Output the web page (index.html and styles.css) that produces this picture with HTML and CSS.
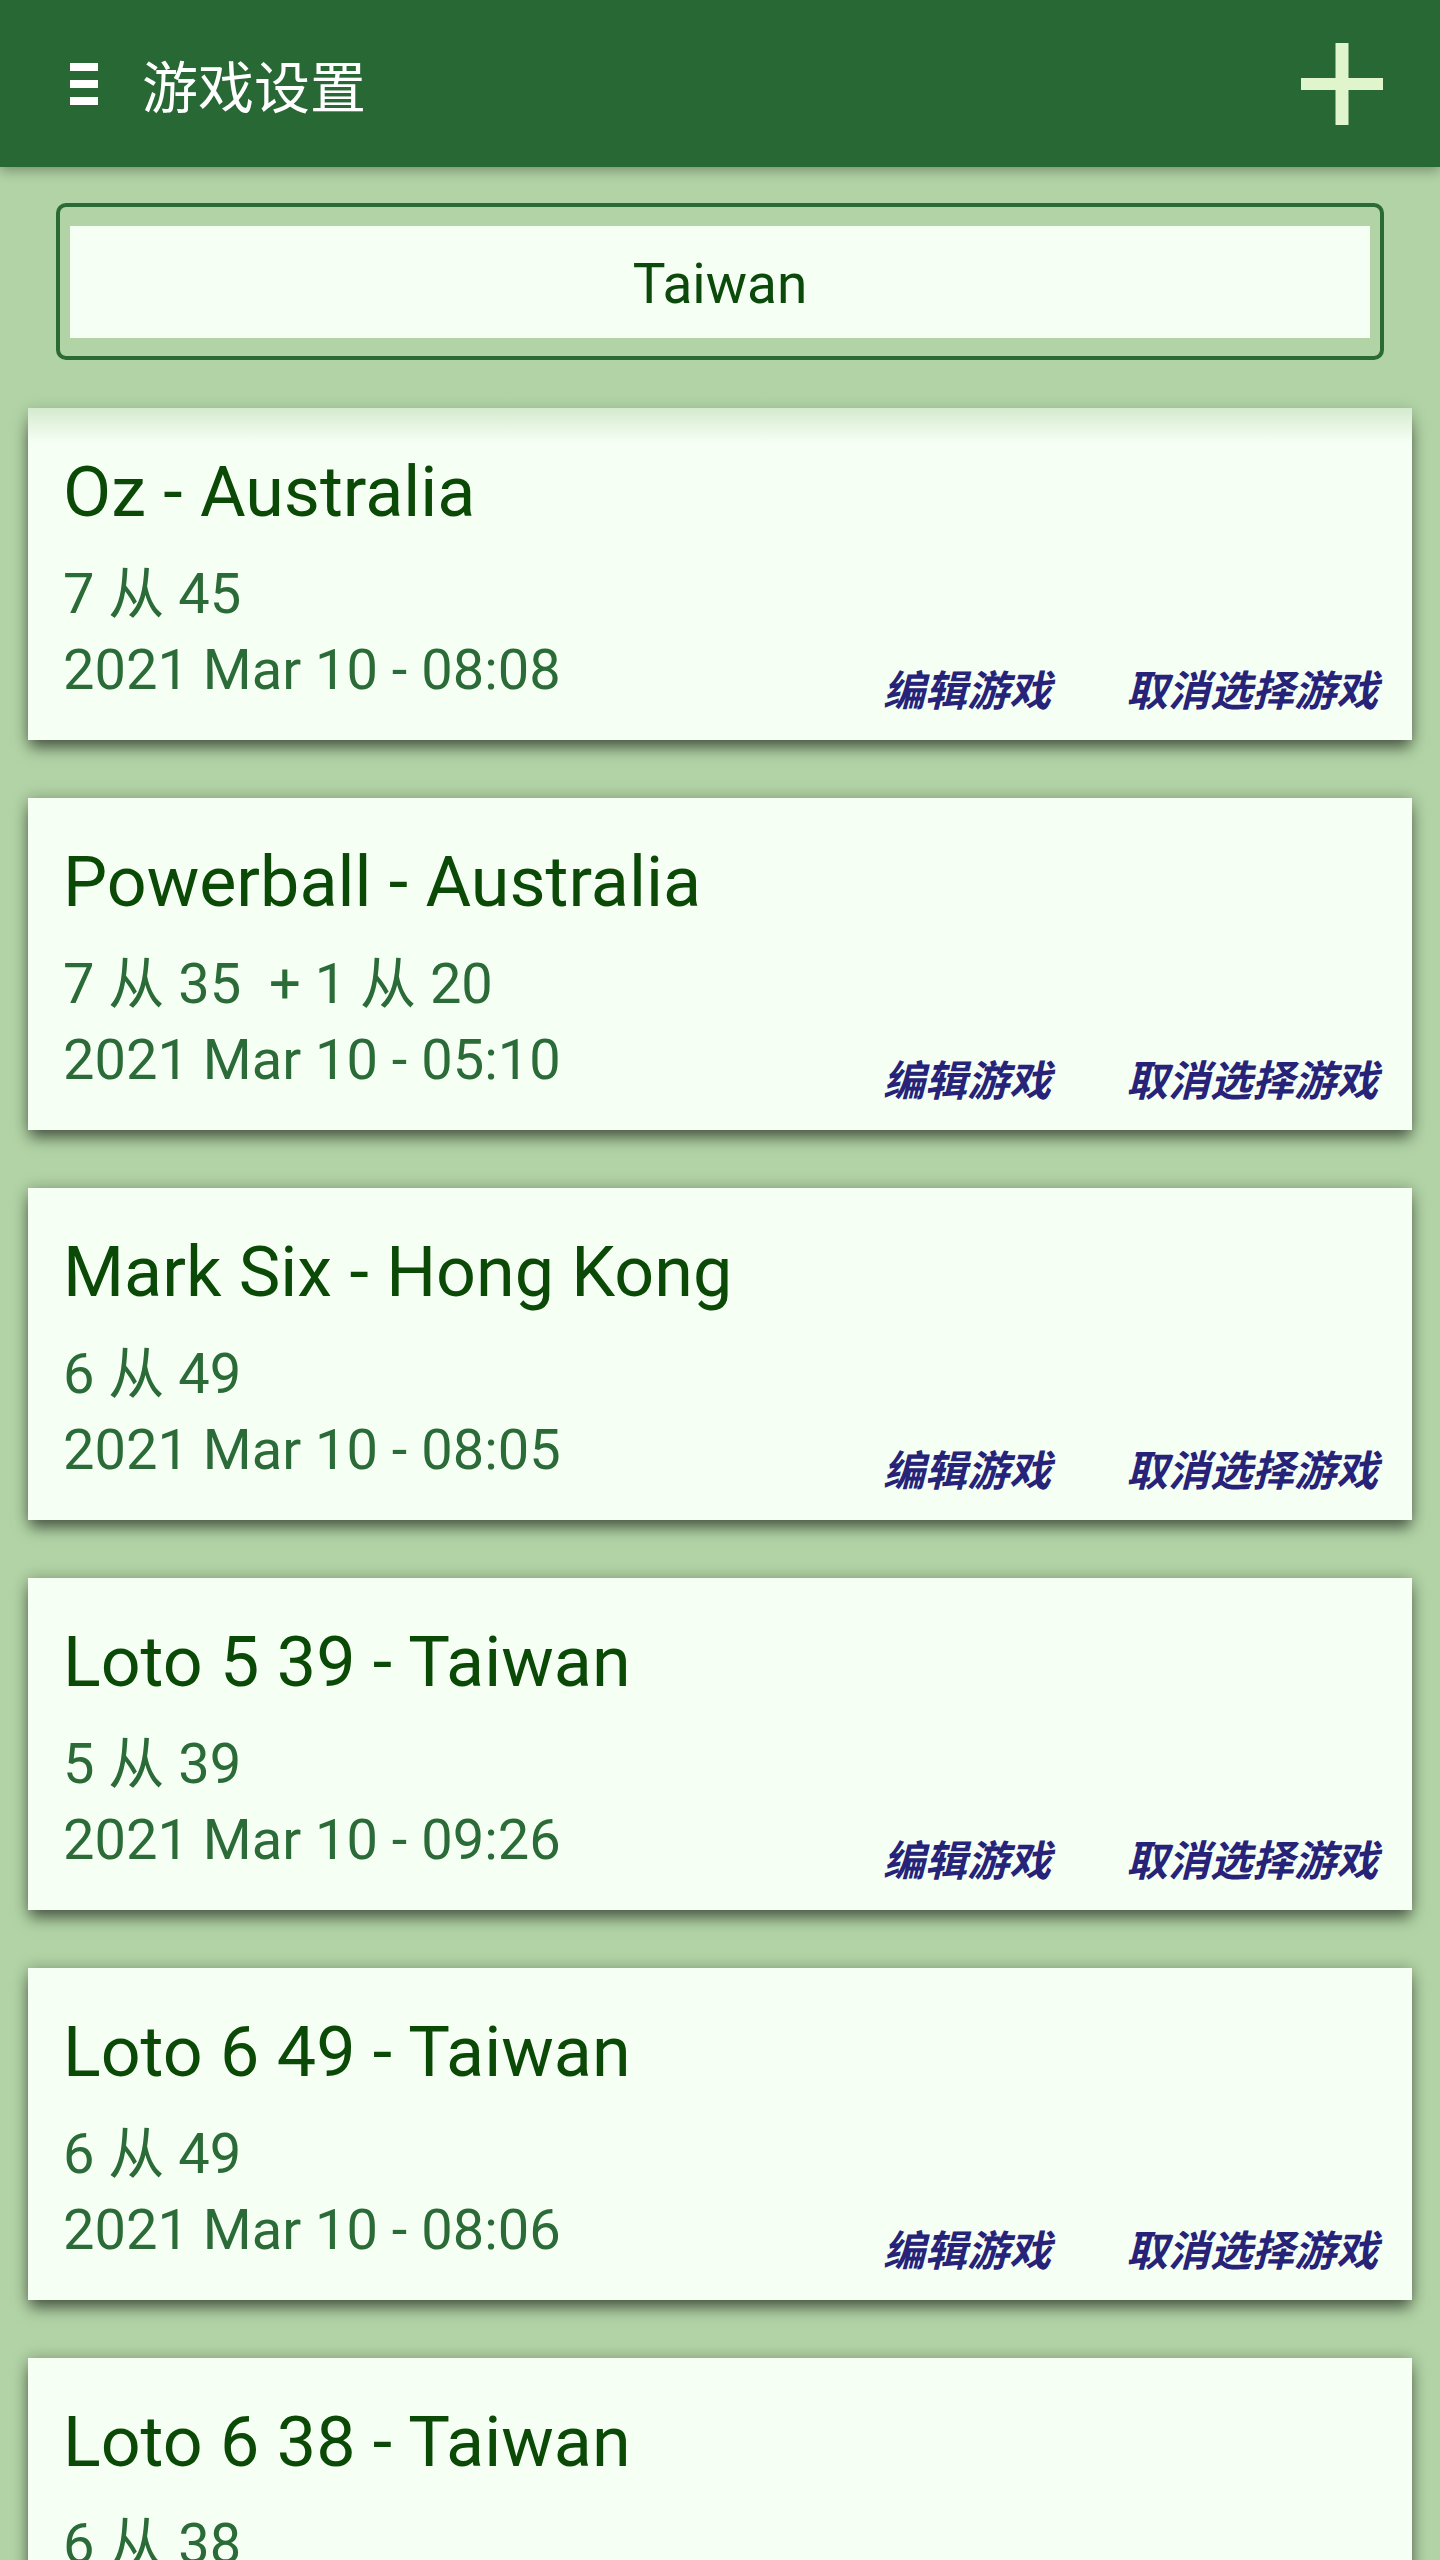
FILE: index.html
```html
<!DOCTYPE html>
<html lang="zh-CN">
<head>
  <meta charset="UTF-8">
  <meta name="viewport" content="width=device-width, initial-scale=1.0">
  <title>游戏设置</title>
  <link rel="stylesheet" href="styles.css">
</head>
<body>
<header class="app-bar">
  <div class="menu-icon">
    <span></span>
    <span></span>
    <span></span>
  </div>
  <h1 class="app-title">游戏设置</h1>
  <svg class="add-icon" width="82" height="82" viewBox="0 0 82 82">
    <rect x="34.5" y="0" width="13" height="82" fill="#e0f5cb"/>
    <rect x="0" y="35" width="82" height="12" fill="#e0f5cb"/>
  </svg>
</header>

<main class="content">
  <div class="region-select">
    <div class="region-value">Taiwan</div>
  </div>

  <div class="game-list">
    <div class="game-item">
      <div class="game-card">
        <div class="game-name">Oz - Australia</div>
        <div class="game-rule">7 从 45</div>
        <div class="game-footer">
          <div class="game-date">2021 Mar 10 - 08:08</div>
          <div class="game-actions">
            <span class="game-link">编辑游戏</span>
            <span class="game-link">取消选择游戏</span>
          </div>
        </div>
      </div>
    </div>

    <div class="game-item">
      <div class="game-card">
        <div class="game-name">Powerball - Australia</div>
        <div class="game-rule">7 从 35 &nbsp;+ 1 从 20</div>
        <div class="game-footer">
          <div class="game-date">2021 Mar 10 - 05:10</div>
          <div class="game-actions">
            <span class="game-link">编辑游戏</span>
            <span class="game-link">取消选择游戏</span>
          </div>
        </div>
      </div>
    </div>

    <div class="game-item">
      <div class="game-card">
        <div class="game-name">Mark Six - Hong Kong</div>
        <div class="game-rule">6 从 49</div>
        <div class="game-footer">
          <div class="game-date">2021 Mar 10 - 08:05</div>
          <div class="game-actions">
            <span class="game-link">编辑游戏</span>
            <span class="game-link">取消选择游戏</span>
          </div>
        </div>
      </div>
    </div>

    <div class="game-item">
      <div class="game-card">
        <div class="game-name">Loto 5 39 - Taiwan</div>
        <div class="game-rule">5 从 39</div>
        <div class="game-footer">
          <div class="game-date">2021 Mar 10 - 09:26</div>
          <div class="game-actions">
            <span class="game-link">编辑游戏</span>
            <span class="game-link">取消选择游戏</span>
          </div>
        </div>
      </div>
    </div>

    <div class="game-item">
      <div class="game-card">
        <div class="game-name">Loto 6 49 - Taiwan</div>
        <div class="game-rule">6 从 49</div>
        <div class="game-footer">
          <div class="game-date">2021 Mar 10 - 08:06</div>
          <div class="game-actions">
            <span class="game-link">编辑游戏</span>
            <span class="game-link">取消选择游戏</span>
          </div>
        </div>
      </div>
    </div>

    <div class="game-item">
      <div class="game-card">
        <div class="game-name">Loto 6 38 - Taiwan</div>
        <div class="game-rule">6 从 38</div>
        <div class="game-footer">
          <div class="game-date">2021 Mar 10 - 08:04</div>
          <div class="game-actions">
            <span class="game-link">编辑游戏</span>
            <span class="game-link">取消选择游戏</span>
          </div>
        </div>
      </div>
    </div>
  </div>
</main>
</body>
</html>
```

FILE: styles.css
```css
* {
  margin: 0;
  padding: 0;
  box-sizing: border-box;
}

html,
body {
  height: 2560px;
  overflow: hidden;
}

body {
  background: #b1d3a5;
  font-family: Roboto, "Noto Sans CJK SC", sans-serif;
}

/* 顶部栏 */
.app-bar {
  position: relative;
  z-index: 2;
  height: 167px;
  background: #276834;
  display: flex;
  align-items: center;
  padding: 0 57px 0 70px;
  box-shadow: 0 3px 12px rgba(0, 0, 0, 0.35);
}

.menu-icon {
  width: 28px;
  display: flex;
  flex-direction: column;
  gap: 9px;
  margin-right: 44px;
}

.menu-icon span {
  display: block;
  height: 8px;
  background: #fff;
}

.app-title {
  flex: 1;
  color: #fff;
  font-family: "Noto Sans CJK SC", sans-serif;
  font-size: 56px;
  font-weight: 400;
  line-height: 1;
}

.add-icon {
  display: block;
}

/* 地区选择 */
.content {
  padding-top: 36px;
}

.region-select {
  margin: 0 56px;
  border: 4px solid #2a6a35;
  border-radius: 10px;
  padding: 19px 10px 18px;
}

.region-value {
  background: #f5fff4;
  height: 112px;
  padding-top: 4px;
  line-height: 108px;
  text-align: center;
  color: #0b4a0b;
  font-size: 55px;
}

/* 游戏列表 */
.game-list {
  position: relative;
  margin-top: 18px;
}

.game-list::before {
  content: '';
  position: absolute;
  top: 0;
  left: 0;
  right: 0;
  height: 64px;
  z-index: 1;
  pointer-events: none;
  background: linear-gradient(to bottom, #b1d3a5 0%, rgba(177, 211, 165, 0.45) 50%, rgba(177, 211, 165, 0) 100%);
}

.game-item {
  padding: 30px 28px 28px;
  overflow: hidden;
}

.game-card {
  background: #f5fff4;
  height: 332px;
  padding: 42px 34px 32px 35px;
  box-shadow: 0 10px 14px -2px rgba(0, 0, 0, 0.5), 0 0 14px rgba(0, 0, 0, 0.25);
}

.game-name {
  color: #0b4a06;
  font-size: 70px;
  line-height: 84px;
  margin-bottom: 22px;
}

.game-rule,
.game-date {
  color: #2a6b37;
  font-size: 56px;
  line-height: 76px;
  white-space: nowrap;
}

.game-footer {
  display: flex;
  align-items: flex-end;
}

.game-date {
  flex: 1;
}

.game-actions {
  display: flex;
  gap: 75px;
  margin-bottom: -1px;
}

.game-link {
  color: #262378;
  font-family: "Noto Sans CJK SC", sans-serif;
  font-size: 42px;
  font-weight: 700;
  font-style: italic;
  line-height: 42px;
}
```
